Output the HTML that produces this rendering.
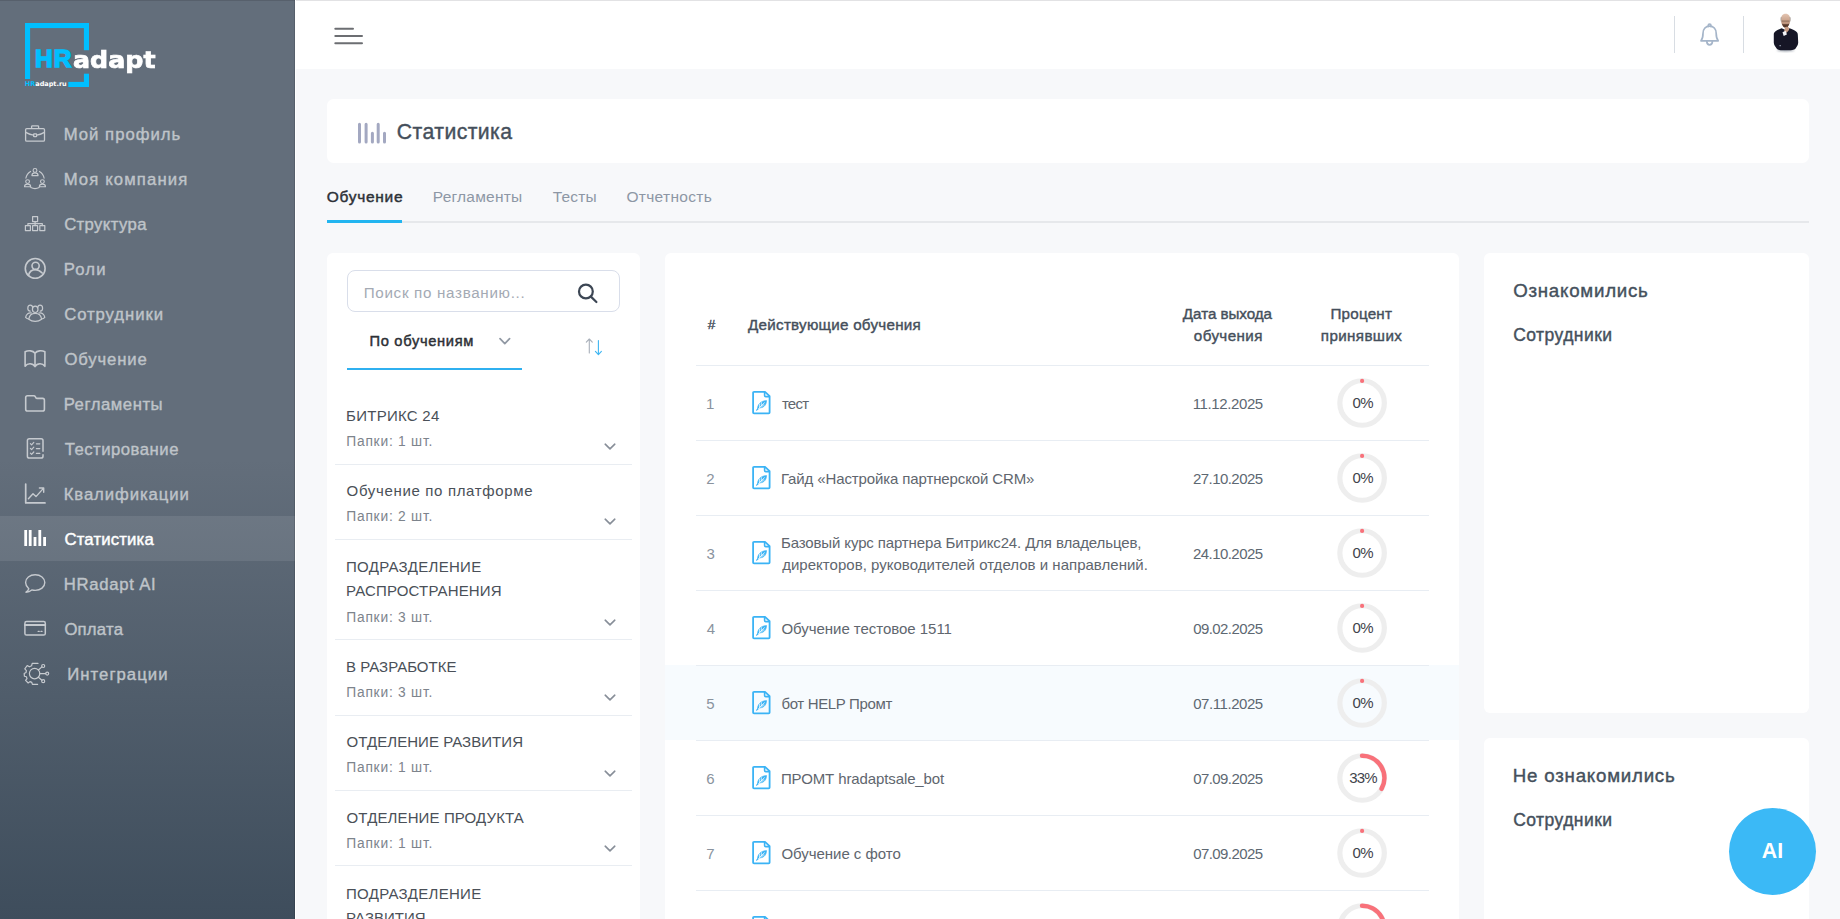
<!DOCTYPE html>
<html lang="ru">
<head>
<meta charset="utf-8">
<title>Статистика</title>
<style>
*{box-sizing:border-box;margin:0;padding:0}
html,body{width:1840px;height:919px;overflow:hidden;background:#f7f8fa;font-family:"Liberation Sans",sans-serif;color:#444b55}
.abs{position:absolute}
#sidebar{position:absolute;left:0;top:0;width:295px;height:919px;background:linear-gradient(to bottom,#636e7b 0%,#636e7b 50%,#3e4d5c 100%)}
#topbar{position:absolute;left:296px;top:0;width:1544px;height:69px;background:#fff;border-top:1px solid #e2e2e4}
.lg{font-weight:bold;white-space:nowrap;transform-origin:0 0}
.card{position:absolute;background:#fff;border-radius:6px}
.rowline{left:696px;width:733px;height:1px;background:#e8edf3}
.li-sep{left:335px;width:297px;height:1px;background:#e9edf2}
</style>
</head>
<body>
<div id="sidebar">
  <div class="abs" style="left:0;top:516px;width:295px;height:45px;background:rgba(255,255,255,.09)"></div>
<svg class="abs" style="left:0;top:0" width="295" height="919" viewBox="0 0 295 919" fill="none" stroke="#c6cacf" stroke-width="1.3" stroke-linecap="round" stroke-linejoin="round">
<!-- logo -->
<g stroke="none" fill="#00bfff">
<rect x="25" y="23" width="64" height="5.1"/>
<rect x="25" y="23" width="5.1" height="56"/>
<rect x="83.9" y="23" width="5.1" height="27.2"/>
<rect x="83.9" y="73.7" width="5.1" height="13.3"/>
<rect x="68.3" y="81.9" width="20.7" height="5.1"/>
</g>
<!-- 1 briefcase -->
<g>
<rect x="25.6" y="128.6" width="18.9" height="12.6" rx="1.2"/>
<path d="M31.6 128.4V126.6Q31.6 125.8 32.4 125.8H37.8Q38.6 125.8 38.6 126.6V128.4"/>
<path d="M25.8 132.4C29 134.2 32 135 33.6 135.2M36.6 135.2C38.2 135 41.2 134.2 44.4 132.4"/>
<rect x="33.6" y="133.8" width="3" height="2.8" rx=".6"/>
</g>
<!-- 2 company -->
<g stroke-width="1.1">
<circle cx="35" cy="170.4" r="1.9"/><path d="M31.9 175.6Q31.9 172.9 35 172.9Q38.1 172.9 38.1 175.6Z"/>
<circle cx="27.6" cy="181.6" r="1.9"/><path d="M24.5 186.8Q24.5 184.1 27.6 184.1Q30.7 184.1 30.7 186.8Z"/>
<circle cx="42.4" cy="181.6" r="1.9"/><path d="M39.3 186.8Q39.3 184.1 42.4 184.1Q45.5 184.1 45.5 186.8Z"/>
<path d="M25.9 178.2A9.4 9.4 0 0 1 30.6 171.4M39.4 171.4A9.4 9.4 0 0 1 44.1 178.2M30.8 187.6A9.4 9.4 0 0 0 39.2 187.6"/>
</g>
<!-- 3 structure -->
<g stroke-width="1.2">
<rect x="32.6" y="216.6" width="5" height="5"/>
<rect x="25.4" y="225.6" width="5" height="5"/>
<rect x="32.6" y="225.6" width="5" height="5"/>
<rect x="39.8" y="225.6" width="5" height="5"/>
<path d="M35.1 221.6V225.6M27.9 225.6V223.6H42.3V225.6"/>
</g>
<!-- 4 roles -->
<g stroke-width="1.6">
<circle cx="35.2" cy="268.4" r="9.9"/>
<circle cx="35.6" cy="265.8" r="3.6"/>
<path d="M28.4 275.4C29.4 271.6 32 269.6 35.6 269.6C37.4 269.6 39.4 270.4 42.2 273"/>
</g>
<!-- 5 employees -->
<g stroke-width="1.2">
<ellipse cx="35.2" cy="309.3" rx="2.8" ry="3.2"/>
<path d="M28.8 319.2C29.4 315 31.8 313.4 35.2 313.4C38.6 313.4 41 315 41.6 319.2C38 322 32.4 322 28.8 319.2Z"/>
<path d="M32.6 307.4C32.4 305.8 31.4 305.2 30.4 305.2C29 305.2 27.8 306.4 27.8 308.2C27.8 309.8 28.8 311 30.2 311.2M37.8 307.4C38 305.8 39 305.2 40 305.2C41.4 305.2 42.6 306.4 42.6 308.2C42.6 309.8 41.6 311 40.2 311.2"/>
<path d="M31.6 313C28.6 312.4 26.2 314 25.6 317.4C26.6 318.4 27.6 318.8 28.8 319M38.8 313C41.8 312.4 44.2 314 44.8 317.4C43.8 318.4 42.8 318.8 41.6 319"/>
</g>
<!-- 6 book -->
<g stroke-width="1.6">
<path d="M35 353.200C33 350.600 28.500 350.100 25.100 351.800V366.300C27.600 362.800 32.600 362.800 35 366.600C37.400 362.800 42.400 362.800 44.900 366.300V351.800C41.500 350.100 37 350.600 35 353.200V366.200"/>
</g>
<!-- 7 folder -->
<g stroke-width="1.6">
<path d="M25.700 397.600Q25.700 395.800 27.500 395.800H33.800Q34.800 395.800 35.300 396.700L35.800 397.600Q36.200 398.400 37.200 398.400H42.600Q44.400 398.400 44.400 400.200V409.200Q44.400 411 42.600 411H27.500Q25.700 411 25.700 409.200Z"/>
</g>
<!-- 8 testing -->
<g stroke-width="1.5">
<path d="M43 451.200V440.600Q43 438.700 41.100 438.700H29.300Q27.400 438.700 27.400 440.600V456.200Q27.400 458.100 29.300 458.100H41.100Q43 458.100 43 456.200V454.800"/>
<path d="M30.400 443.600L31.600 444.800L33.800 442.400M30.400 448.400L31.600 449.600L33.800 447.200M30.400 453.200L31.600 454.400L33.800 452M36.400 443.800H39.800M36.400 448.600H39.800M36.400 453.400H39.800" stroke-width="1.2"/>
</g>
<!-- 9 qualifications -->
<g stroke-width="1.7">
<path d="M25.700 484V502.900H45"/>
<path d="M28.400 498.800L33 493.800L36 496.600L43.400 488.400M39.400 488H43.700V492.300" stroke-width="1.4"/>
</g>
<!-- 10 stats -->
<g stroke="#ffffff" stroke-width="2.8" stroke-linecap="butt">
<path d="M25.700 530V546.100M30.200 530V546.100M35 537V546.100M39.800 530V546.100M44.600 537V546.100"/>
</g>
<!-- 11 chat -->
<g stroke-width="1.4">
<path d="M26 592.200C27.400 591.400 28.400 590.200 28.800 588.800C26.800 587 25.600 584.800 25.600 582.600C25.600 578.200 29.800 574.800 35.200 574.800C40.600 574.800 44.800 578.200 44.800 582.600C44.800 587 40.600 590.400 35.200 590.400C34 590.400 32.800 590.200 31.800 589.900C30.200 591.400 28.200 592.200 26 592.200Z"/>
</g>
<!-- 12 payment -->
<g stroke-width="1.5">
<rect x="24.900" y="621.600" width="20.400" height="13.500" rx="1.600"/>
<path d="M25 625H45.200" stroke-width="2"/>
<path d="M38.200 631.400H39.200M41 631.400H42" stroke-width="1.3"/>
</g>
<!-- 13 integrations -->
<g stroke-width="1.2">
<circle cx="34.600" cy="673.600" r="5.200"/>
<path d="M38 663.400H32.200L31.600 665.800L29.400 666.800L27.200 665.500L24.800 668.800L26.400 670.600L26 672.600L24.200 673.600L24.400 676.200L26.400 676.800L27 678.600L25.600 680.400L28.200 683L30 681.600L31.800 682.400L32.400 684.400H37.600"/>
<circle cx="43.200" cy="666" r="1.500"/><circle cx="47.200" cy="673.600" r="1.500"/><circle cx="43.200" cy="681.200" r="1.500"/>
<path d="M38.400 670L41.900 666.900M39.800 673.600H45.700M38.400 677.200L41.900 680.300"/>
</g>
</svg>
<div class="abs lg" style="left:35px;top:41.2px;font-size:24.4px;line-height:36px;color:#00bfff;font-family:'Liberation Sans',sans-serif;transform:scaleX(1.0);-webkit-text-stroke:1.5px #00bfff;letter-spacing:1.2px">HR</div>
<div class="abs lg" style="left:73.4px;top:42px;font-size:22.6px;line-height:36px;color:#fff;font-family:'DejaVu Sans',sans-serif;transform:scaleX(1.12);-webkit-text-stroke:.7px #fff">adapt</div>
<div class="abs lg" style="left:24.8px;top:78.2px;font-size:6.5px;line-height:12px;color:#00bfff;font-family:'DejaVu Sans',sans-serif">HR<span style="color:#fff">adapt.ru</span></div>

<div class="abs" style="left:63.65px;top:125.11px;font-size:16.7px;line-height:20px;color:#bfc4c9;white-space:nowrap;-webkit-text-stroke:0.4px #bfc4c9;letter-spacing:1.025px">Мой профиль</div>
<div class="abs" style="left:63.65px;top:170.11px;font-size:16.7px;line-height:20px;color:#bfc4c9;white-space:nowrap;-webkit-text-stroke:0.4px #bfc4c9;letter-spacing:1.127px">Моя компания</div>
<div class="abs" style="left:64.15px;top:215.11px;font-size:16.7px;line-height:20px;color:#bfc4c9;white-space:nowrap;-webkit-text-stroke:0.4px #bfc4c9;letter-spacing:0.394px">Структура</div>
<div class="abs" style="left:63.65px;top:260.11px;font-size:16.7px;line-height:20px;color:#bfc4c9;white-space:nowrap;-webkit-text-stroke:0.4px #bfc4c9;letter-spacing:1.183px">Роли</div>
<div class="abs" style="left:64.15px;top:305.11px;font-size:16.7px;line-height:20px;color:#bfc4c9;white-space:nowrap;-webkit-text-stroke:0.4px #bfc4c9;letter-spacing:0.939px">Сотрудники</div>
<div class="abs" style="left:64.40px;top:350.11px;font-size:16.7px;line-height:20px;color:#bfc4c9;white-space:nowrap;-webkit-text-stroke:0.4px #bfc4c9;letter-spacing:0.864px">Обучение</div>
<div class="abs" style="left:63.65px;top:395.11px;font-size:16.7px;line-height:20px;color:#bfc4c9;white-space:nowrap;-webkit-text-stroke:0.4px #bfc4c9;letter-spacing:0.550px">Регламенты</div>
<div class="abs" style="left:64.65px;top:440.11px;font-size:16.7px;line-height:20px;color:#bfc4c9;white-space:nowrap;-webkit-text-stroke:0.4px #bfc4c9;letter-spacing:0.509px">Тестирование</div>
<div class="abs" style="left:63.65px;top:485.11px;font-size:16.7px;line-height:20px;color:#bfc4c9;white-space:nowrap;-webkit-text-stroke:0.4px #bfc4c9;letter-spacing:0.923px">Квалификации</div>
<div class="abs" style="left:64.40px;top:530.11px;font-size:16.7px;line-height:20px;color:#ffffff;white-space:nowrap;-webkit-text-stroke:0.45px #ffffff;letter-spacing:0.189px">Статистика</div>
<div class="abs" style="left:63.65px;top:575.11px;font-size:16.7px;line-height:20px;color:#bfc4c9;white-space:nowrap;-webkit-text-stroke:0.4px #bfc4c9;letter-spacing:0.750px">HRadapt AI</div>
<div class="abs" style="left:64.40px;top:620.11px;font-size:16.7px;line-height:20px;color:#bfc4c9;white-space:nowrap;-webkit-text-stroke:0.4px #bfc4c9;letter-spacing:0.230px">Оплата</div>
<div class="abs" style="left:67.25px;top:665.11px;font-size:16.7px;line-height:20px;color:#bfc4c9;white-space:nowrap;-webkit-text-stroke:0.4px #bfc4c9;letter-spacing:1.050px">Интеграции</div>
</div>
<div id="topbar"></div>
<div class="abs" style="left:295px;top:0;width:1px;height:919px;background:#fff"></div>
<div class="abs" style="left:0;top:0;width:295px;height:1px;background:rgba(0,0,0,.12)"></div>
<div class="abs" style="left:294px;top:0;width:1px;height:919px;background:rgba(0,0,0,.13)"></div>
<svg class="abs" style="left:295px;top:0" width="1545" height="69" viewBox="295 0 1545 69" fill="none" stroke-linecap="round" stroke-linejoin="round">
<path d="M335.300 28.700H353M335.300 36H362M335.300 43.200H362" stroke="#6c6e72" stroke-width="2"/>
<path d="M1674.500 16V53M1743.500 16V53" stroke="#d8dde3" stroke-width="1" stroke-linecap="butt"/>
<g stroke="#a5b5c9" stroke-width="1.700">
<path d="M1701 40.800H1718.200C1716.600 39 1716.200 37 1716.200 33.600C1716.200 29 1713.400 26.200 1709.600 26.200C1705.800 26.200 1703 29 1703 33.600C1703 37 1702.600 39 1701 40.800Z"/>
<path d="M1708.300 26.400V25.300A1.300 1.300 0 0 1 1710.900 25.300V26.400"/>
<path d="M1706.800 41.200C1706.800 43.400 1708 44.800 1709.600 44.800C1711.200 44.800 1712.400 43.400 1712.400 41.200"/>
</g>
<!-- avatar -->
<defs>
<linearGradient id="hd" x1="0" y1="0" x2="0" y2="1"><stop offset="0" stop-color="#e3c5b2"/><stop offset=".55" stop-color="#c9a088"/><stop offset="1" stop-color="#a57f69"/></linearGradient>
<filter id="bl" x="-20%" y="-20%" width="140%" height="140%"><feGaussianBlur stdDeviation=".45"/></filter>
<filter id="bl2" x="-20%" y="-20%" width="140%" height="160%"><feGaussianBlur stdDeviation=".9"/></filter>
</defs>
<g stroke="none" filter="url(#bl)">
<ellipse cx="1785.600" cy="50.200" rx="8.600" ry="1.300" fill="#9aa0aa" filter="url(#bl2)"/>
<path d="M1781 20.500C1780.600 16 1782.600 13.700 1785.600 13.700C1788.600 13.700 1790.600 16 1790.200 20.500C1790 24 1788.200 27.400 1785.600 27.400C1783 27.400 1781.200 24 1781 20.500Z" fill="url(#hd)"/>
<path d="M1781.100 17.500C1780.800 18.600 1780.800 20 1781.200 21.200M1790.100 17.500C1790.400 18.600 1790.400 20 1790 21.200" stroke="#a9a39d" stroke-width=".9" fill="none"/>
<path d="M1782.200 21.100H1789" stroke="#6f5646" stroke-width=".7" fill="none"/>
<path d="M1782 23.400C1782.600 26.200 1784 27.600 1785.600 27.600C1787.200 27.600 1788.600 26.200 1789.200 23.400C1787.800 24.600 1783.400 24.600 1782 23.400Z" fill="#55392a"/>
<path d="M1773.800 34.500C1773.800 31.800 1776 30.600 1781.600 28.200L1785.600 30L1789.600 28.200C1795.200 30.600 1797.800 31.800 1797.800 34.500L1798.200 42.600C1798.200 45.400 1796.800 46.800 1795.600 48.400C1794.400 50 1791 50.200 1785.600 50.200C1780.200 50.200 1777.600 50 1776.600 48.400C1775.400 46.600 1773.800 45.400 1773.800 42.600Z" fill="#131728"/>
<path d="M1784 31.500L1785 27.800C1785.400 26.600 1787.600 26.200 1788.600 27.200C1789.400 28 1789.400 29.600 1788.600 30.400L1786.600 32.800Z" fill="#c79c84"/>
<path d="M1782.500 32.200L1785.700 30.800L1786.900 34.600L1783.700 36Z" fill="#f3f3f6"/>
<rect x="1779.400" y="45.200" width="1.600" height="1" fill="#9aa0b0"/>
</g>
</svg>

<div class="card" id="titlecard" style="left:327px;top:99px;width:1482px;height:64px;border-radius:6.5px">
  <svg class="abs" style="left:30px;top:22px" width="30" height="24" viewBox="0 0 30 24" fill="none" stroke="#a3a8c1" stroke-width="3" stroke-linecap="round"><path d="M2.5 3.3V21M9.1 3.3V21M15.4 12.3V21M21.2 3.3V21M27.5 12.3V21"/></svg>
</div>
<div class="abs" style="left:327px;top:221px;width:1482px;height:2px;background:#e6e8eb"></div>
<div class="abs" style="left:327px;top:220px;width:75px;height:3px;background:#22b5f0"></div>

<div class="card" id="left" style="left:327px;top:253px;width:313px;height:700px"></div>
<div class="card" id="mid" style="left:665px;top:253px;width:794px;height:700px"></div>
<div class="card" id="r1" style="left:1484px;top:253px;width:325px;height:460px"></div>
<div class="card" id="r2" style="left:1484px;top:738px;width:325px;height:300px"></div>

<!-- left panel -->
<div class="abs" style="left:347px;top:270px;width:273px;height:42px;border:1px solid #d9deea;border-radius:8px;background:#fff"></div>
<svg class="abs" style="left:574px;top:280px" width="28" height="26" viewBox="0 0 28 26" fill="none" stroke="#3c4654" stroke-width="2.2" stroke-linecap="round"><circle cx="11.9" cy="11.5" r="6.9"/><path d="M16.9 16.6L22.4 22"/></svg>
<svg class="abs" style="left:497px;top:335px" width="16" height="12" viewBox="0 0 16 12" fill="none" stroke="#9098a3" stroke-width="1.7" stroke-linecap="round" stroke-linejoin="round"><path d="M3 3.6L7.8 8.6L12.6 3.6"/></svg>
<div class="abs" style="left:347px;top:368px;width:175px;height:2px;background:#2fb0f0"></div>
<svg class="abs" style="left:582px;top:334px" width="24" height="24" viewBox="0 0 24 24" fill="none" stroke-width="1.1" stroke-linecap="round" stroke-linejoin="round"><path d="M7.3 19V5.2M4.3 8.2L7.3 5L10.3 8.2" stroke="#a9b0ba"/><path d="M16.4 6.5V20.5M13.4 17.4L16.4 20.7L19.4 17.4" stroke="#3fb6f2"/></svg>
<svg class="abs" style="left:602px;top:441.0px" width="16" height="12" viewBox="0 0 16 12" fill="none" stroke="#878e98" stroke-width="1.6" stroke-linecap="round" stroke-linejoin="round"><path d="M3.2 3.2L8 7.8L12.8 3.2"/></svg>
<div class="abs li-sep" style="top:464px"></div>
<svg class="abs" style="left:602px;top:516.4px" width="16" height="12" viewBox="0 0 16 12" fill="none" stroke="#878e98" stroke-width="1.6" stroke-linecap="round" stroke-linejoin="round"><path d="M3.2 3.2L8 7.8L12.8 3.2"/></svg>
<div class="abs li-sep" style="top:539px"></div>
<svg class="abs" style="left:602px;top:616.8px" width="16" height="12" viewBox="0 0 16 12" fill="none" stroke="#878e98" stroke-width="1.6" stroke-linecap="round" stroke-linejoin="round"><path d="M3.2 3.2L8 7.8L12.8 3.2"/></svg>
<div class="abs li-sep" style="top:639px"></div>
<svg class="abs" style="left:602px;top:692.2px" width="16" height="12" viewBox="0 0 16 12" fill="none" stroke="#878e98" stroke-width="1.6" stroke-linecap="round" stroke-linejoin="round"><path d="M3.2 3.2L8 7.8L12.8 3.2"/></svg>
<div class="abs li-sep" style="top:715px"></div>
<svg class="abs" style="left:602px;top:767.6px" width="16" height="12" viewBox="0 0 16 12" fill="none" stroke="#878e98" stroke-width="1.6" stroke-linecap="round" stroke-linejoin="round"><path d="M3.2 3.2L8 7.8L12.8 3.2"/></svg>
<div class="abs li-sep" style="top:790px"></div>
<svg class="abs" style="left:602px;top:843.0px" width="16" height="12" viewBox="0 0 16 12" fill="none" stroke="#878e98" stroke-width="1.6" stroke-linecap="round" stroke-linejoin="round"><path d="M3.2 3.2L8 7.8L12.8 3.2"/></svg>
<div class="abs li-sep" style="top:865px"></div>
<svg class="abs" style="left:602px;top:943.4px" width="16" height="12" viewBox="0 0 16 12" fill="none" stroke="#878e98" stroke-width="1.6" stroke-linecap="round" stroke-linejoin="round"><path d="M3.2 3.2L8 7.8L12.8 3.2"/></svg>
<div class="abs li-sep" style="top:966px"></div>
<!-- mid panel -->
<div class="abs rowline" style="top:365px"></div>
<div class="abs rowline" style="top:440px"></div>
<div class="abs rowline" style="top:515px"></div>
<div class="abs rowline" style="top:590px"></div>
<div class="abs" style="left:665px;top:665px;width:794px;height:75px;background:#f7fbfe"></div>
<div class="abs rowline" style="top:665px"></div>
<div class="abs rowline" style="top:740px"></div>
<div class="abs rowline" style="top:815px"></div>
<div class="abs rowline" style="top:890px"></div>
<svg class="abs" style="left:665px;top:254px" width="794" height="665" viewBox="665 254 794 665">
<g transform="translate(752.0,390.8)" fill="none" stroke="#3bb3f5" stroke-width="1.8" stroke-linejoin="round" stroke-linecap="round"><path d="M2 1 H13 L17.600 5.400 V21.600 Q17.600 22.500 16.700 22.500 H2 Q1.100 22.500 1.100 21.600 V1.900 Q1.100 1 2 1 Z"/><path d="M12.6 1.4 V4.6 Q12.6 5.8 13.8 5.8 H17.2" stroke-width="1.6"/><path d="M5.600 18.400 C5.200 13.600 8.800 10 14.600 9.800 C14.400 14.800 11.200 17.400 6.600 17.200 Z" fill="#3bb3f5" stroke-width="0.6"/><path d="M5.400 18.800 L12.400 12" stroke="#fff" stroke-width="0.8"/><path d="M7.600 16.300 L10.200 16 M9.300 14.600 L12 14.200 M7.400 15.800 L7.500 13.200 M9.200 14.200 L9.400 11.800" stroke="#fff" stroke-width="0.7"/><path d="M4.6 19.4 L6 18" stroke-width="1.2"/></g>

<circle cx="1362.1" cy="403.0" r="22.25" fill="none" stroke="#eeeeee" stroke-width="5.2"/><circle cx="1362.1" cy="380.9" r="2.1" fill="#f8717a"/>
<g transform="translate(752.0,465.8)" fill="none" stroke="#3bb3f5" stroke-width="1.8" stroke-linejoin="round" stroke-linecap="round"><path d="M2 1 H13 L17.600 5.400 V21.600 Q17.600 22.500 16.700 22.500 H2 Q1.100 22.500 1.100 21.600 V1.900 Q1.100 1 2 1 Z"/><path d="M12.6 1.4 V4.6 Q12.6 5.8 13.8 5.8 H17.2" stroke-width="1.6"/><path d="M5.600 18.400 C5.200 13.600 8.800 10 14.600 9.800 C14.400 14.800 11.200 17.400 6.600 17.200 Z" fill="#3bb3f5" stroke-width="0.6"/><path d="M5.400 18.800 L12.400 12" stroke="#fff" stroke-width="0.8"/><path d="M7.600 16.300 L10.200 16 M9.300 14.600 L12 14.200 M7.400 15.800 L7.500 13.200 M9.200 14.200 L9.400 11.800" stroke="#fff" stroke-width="0.7"/><path d="M4.6 19.4 L6 18" stroke-width="1.2"/></g>

<circle cx="1362.1" cy="478.0" r="22.25" fill="none" stroke="#eeeeee" stroke-width="5.2"/><circle cx="1362.1" cy="455.9" r="2.1" fill="#f8717a"/>
<g transform="translate(752.0,540.8)" fill="none" stroke="#3bb3f5" stroke-width="1.8" stroke-linejoin="round" stroke-linecap="round"><path d="M2 1 H13 L17.600 5.400 V21.600 Q17.600 22.500 16.700 22.500 H2 Q1.100 22.500 1.100 21.600 V1.900 Q1.100 1 2 1 Z"/><path d="M12.6 1.4 V4.6 Q12.6 5.8 13.8 5.8 H17.2" stroke-width="1.6"/><path d="M5.600 18.400 C5.200 13.600 8.800 10 14.600 9.800 C14.400 14.800 11.200 17.400 6.600 17.200 Z" fill="#3bb3f5" stroke-width="0.6"/><path d="M5.400 18.800 L12.400 12" stroke="#fff" stroke-width="0.8"/><path d="M7.600 16.300 L10.200 16 M9.300 14.600 L12 14.200 M7.400 15.800 L7.500 13.200 M9.200 14.200 L9.400 11.800" stroke="#fff" stroke-width="0.7"/><path d="M4.6 19.4 L6 18" stroke-width="1.2"/></g>

<circle cx="1362.1" cy="553.0" r="22.25" fill="none" stroke="#eeeeee" stroke-width="5.2"/><circle cx="1362.1" cy="530.9" r="2.1" fill="#f8717a"/>
<g transform="translate(752.0,615.8)" fill="none" stroke="#3bb3f5" stroke-width="1.8" stroke-linejoin="round" stroke-linecap="round"><path d="M2 1 H13 L17.600 5.400 V21.600 Q17.600 22.500 16.700 22.500 H2 Q1.100 22.500 1.100 21.600 V1.900 Q1.100 1 2 1 Z"/><path d="M12.6 1.4 V4.6 Q12.6 5.8 13.8 5.8 H17.2" stroke-width="1.6"/><path d="M5.600 18.400 C5.200 13.600 8.800 10 14.600 9.800 C14.400 14.800 11.200 17.400 6.600 17.200 Z" fill="#3bb3f5" stroke-width="0.6"/><path d="M5.400 18.800 L12.400 12" stroke="#fff" stroke-width="0.8"/><path d="M7.600 16.300 L10.200 16 M9.300 14.600 L12 14.200 M7.400 15.800 L7.500 13.200 M9.200 14.200 L9.400 11.800" stroke="#fff" stroke-width="0.7"/><path d="M4.6 19.4 L6 18" stroke-width="1.2"/></g>

<circle cx="1362.1" cy="628.0" r="22.25" fill="none" stroke="#eeeeee" stroke-width="5.2"/><circle cx="1362.1" cy="605.9" r="2.1" fill="#f8717a"/>
<g transform="translate(752.0,690.8)" fill="none" stroke="#3bb3f5" stroke-width="1.8" stroke-linejoin="round" stroke-linecap="round"><path d="M2 1 H13 L17.600 5.400 V21.600 Q17.600 22.500 16.700 22.500 H2 Q1.100 22.500 1.100 21.600 V1.900 Q1.100 1 2 1 Z"/><path d="M12.6 1.4 V4.6 Q12.6 5.8 13.8 5.8 H17.2" stroke-width="1.6"/><path d="M5.600 18.400 C5.200 13.600 8.800 10 14.600 9.800 C14.400 14.800 11.200 17.400 6.600 17.200 Z" fill="#3bb3f5" stroke-width="0.6"/><path d="M5.400 18.800 L12.400 12" stroke="#fff" stroke-width="0.8"/><path d="M7.600 16.300 L10.200 16 M9.300 14.600 L12 14.200 M7.400 15.800 L7.500 13.200 M9.200 14.200 L9.400 11.800" stroke="#fff" stroke-width="0.7"/><path d="M4.6 19.4 L6 18" stroke-width="1.2"/></g>

<circle cx="1362.1" cy="703.0" r="22.25" fill="none" stroke="#eeeeee" stroke-width="5.2"/><circle cx="1362.1" cy="680.9" r="2.1" fill="#f8717a"/>
<g transform="translate(752.0,765.8)" fill="none" stroke="#3bb3f5" stroke-width="1.8" stroke-linejoin="round" stroke-linecap="round"><path d="M2 1 H13 L17.600 5.400 V21.600 Q17.600 22.500 16.700 22.500 H2 Q1.100 22.500 1.100 21.600 V1.900 Q1.100 1 2 1 Z"/><path d="M12.6 1.4 V4.6 Q12.6 5.8 13.8 5.8 H17.2" stroke-width="1.6"/><path d="M5.600 18.400 C5.200 13.600 8.800 10 14.600 9.800 C14.400 14.800 11.200 17.400 6.600 17.200 Z" fill="#3bb3f5" stroke-width="0.6"/><path d="M5.400 18.800 L12.400 12" stroke="#fff" stroke-width="0.8"/><path d="M7.600 16.300 L10.200 16 M9.300 14.600 L12 14.200 M7.400 15.800 L7.500 13.200 M9.200 14.200 L9.400 11.800" stroke="#fff" stroke-width="0.7"/><path d="M4.6 19.4 L6 18" stroke-width="1.2"/></g>

<circle cx="1362.1" cy="778.0" r="22.25" fill="none" stroke="#eeeeee" stroke-width="5.2"/><path d="M1362.1 755.75 A22.25 22.25 0 0 1 1381.60 788.72" fill="none" stroke="#f8717a" stroke-width="4.6" stroke-linecap="round"/>
<g transform="translate(752.0,840.8)" fill="none" stroke="#3bb3f5" stroke-width="1.8" stroke-linejoin="round" stroke-linecap="round"><path d="M2 1 H13 L17.600 5.400 V21.600 Q17.600 22.500 16.700 22.500 H2 Q1.100 22.500 1.100 21.600 V1.900 Q1.100 1 2 1 Z"/><path d="M12.6 1.4 V4.6 Q12.6 5.8 13.8 5.8 H17.2" stroke-width="1.6"/><path d="M5.600 18.400 C5.200 13.600 8.800 10 14.600 9.800 C14.400 14.800 11.200 17.400 6.600 17.200 Z" fill="#3bb3f5" stroke-width="0.6"/><path d="M5.400 18.800 L12.400 12" stroke="#fff" stroke-width="0.8"/><path d="M7.600 16.300 L10.200 16 M9.300 14.600 L12 14.200 M7.400 15.800 L7.500 13.200 M9.200 14.200 L9.400 11.800" stroke="#fff" stroke-width="0.7"/><path d="M4.6 19.4 L6 18" stroke-width="1.2"/></g>

<circle cx="1362.1" cy="853.0" r="22.25" fill="none" stroke="#eeeeee" stroke-width="5.2"/><circle cx="1362.1" cy="830.9" r="2.1" fill="#f8717a"/>
<g transform="translate(752.0,915.8)" fill="none" stroke="#3bb3f5" stroke-width="1.8" stroke-linejoin="round" stroke-linecap="round"><path d="M2 1 H13 L17.600 5.400 V21.600 Q17.600 22.500 16.700 22.500 H2 Q1.100 22.500 1.100 21.600 V1.900 Q1.100 1 2 1 Z"/><path d="M12.6 1.4 V4.6 Q12.6 5.8 13.8 5.8 H17.2" stroke-width="1.6"/><path d="M5.600 18.400 C5.200 13.600 8.800 10 14.600 9.800 C14.400 14.800 11.200 17.400 6.600 17.200 Z" fill="#3bb3f5" stroke-width="0.6"/><path d="M5.400 18.800 L12.400 12" stroke="#fff" stroke-width="0.8"/><path d="M7.600 16.300 L10.200 16 M9.300 14.600 L12 14.200 M7.400 15.800 L7.500 13.200 M9.200 14.200 L9.400 11.800" stroke="#fff" stroke-width="0.7"/><path d="M4.6 19.4 L6 18" stroke-width="1.2"/></g>

<circle cx="1362.1" cy="928.0" r="22.25" fill="none" stroke="#eeeeee" stroke-width="5.2"/><path d="M1362.1 905.75 A22.25 22.25 0 0 1 1381.60 938.72" fill="none" stroke="#f8717a" stroke-width="4.6" stroke-linecap="round"/>
</svg>
<div class="abs" style="left:396.85px;top:122.35px;font-size:21.2px;line-height:20px;color:#454f5b;white-space:nowrap;-webkit-text-stroke:0.4px #454f5b;letter-spacing:0.439px">Статистика</div>
<div class="abs" style="left:326.70px;top:187.43px;font-size:15.5px;line-height:20px;color:#2e3238;white-space:nowrap;-webkit-text-stroke:0.45px #2e3238;letter-spacing:0.714px">Обучение</div>
<div class="abs" style="left:432.85px;top:187.43px;font-size:15.5px;line-height:20px;color:#8d97a5;white-space:nowrap;letter-spacing:0.222px">Регламенты</div>
<div class="abs" style="left:552.75px;top:187.43px;font-size:15.5px;line-height:20px;color:#8d97a5;white-space:nowrap;letter-spacing:0.175px">Тесты</div>
<div class="abs" style="left:626.45px;top:187.43px;font-size:15.5px;line-height:20px;color:#8d97a5;white-space:nowrap;letter-spacing:0.317px">Отчетность</div>
<div class="abs" style="left:363.75px;top:282.53px;font-size:15.2px;line-height:20px;color:#a4aab4;white-space:nowrap;letter-spacing:0.674px">Поиск по названию...</div>
<div class="abs" style="left:369.60px;top:330.61px;font-size:14.7px;line-height:20px;color:#2d3036;white-space:nowrap;-webkit-text-stroke:0.45px #2d3036;letter-spacing:0.650px">По обучениям</div>
<div class="abs" style="left:346.05px;top:405.60px;font-size:15px;line-height:20px;color:#4a5058;white-space:nowrap;letter-spacing:0.272px">БИТРИКС 24</div>
<div class="abs" style="left:346.30px;top:431.72px;font-size:13.8px;line-height:20px;color:#7d848c;white-space:nowrap;letter-spacing:0.755px">Папки: 1 шт.</div>
<div class="abs" style="left:346.55px;top:481.00px;font-size:15px;line-height:20px;color:#4a5058;white-space:nowrap;letter-spacing:0.665px">Обучение по платформе</div>
<div class="abs" style="left:346.30px;top:507.12px;font-size:13.8px;line-height:20px;color:#7d848c;white-space:nowrap;letter-spacing:0.755px">Папки: 2 шт.</div>
<div class="abs" style="left:346.05px;top:557.40px;font-size:15px;line-height:20px;color:#4a5058;white-space:nowrap;letter-spacing:0.275px">ПОДРАЗДЕЛЕНИЕ</div>
<div class="abs" style="left:346.05px;top:581.40px;font-size:15px;line-height:20px;color:#4a5058;white-space:nowrap;letter-spacing:0.150px">РАСПРОСТРАНЕНИЯ</div>
<div class="abs" style="left:346.30px;top:607.52px;font-size:13.8px;line-height:20px;color:#7d848c;white-space:nowrap;letter-spacing:0.755px">Папки: 3 шт.</div>
<div class="abs" style="left:346.05px;top:656.80px;font-size:15px;line-height:20px;color:#4a5058;white-space:nowrap;letter-spacing:0.009px">В РАЗРАБОТКЕ</div>
<div class="abs" style="left:346.30px;top:682.92px;font-size:13.8px;line-height:20px;color:#7d848c;white-space:nowrap;letter-spacing:0.755px">Папки: 3 шт.</div>
<div class="abs" style="left:346.55px;top:732.20px;font-size:15px;line-height:20px;color:#4a5058;white-space:nowrap;letter-spacing:0.050px">ОТДЕЛЕНИЕ РАЗВИТИЯ</div>
<div class="abs" style="left:346.30px;top:758.32px;font-size:13.8px;line-height:20px;color:#7d848c;white-space:nowrap;letter-spacing:0.755px">Папки: 1 шт.</div>
<div class="abs" style="left:346.55px;top:807.60px;font-size:15px;line-height:20px;color:#4a5058;white-space:nowrap;letter-spacing:0.124px">ОТДЕЛЕНИЕ ПРОДУКТА</div>
<div class="abs" style="left:346.30px;top:833.72px;font-size:13.8px;line-height:20px;color:#7d848c;white-space:nowrap;letter-spacing:0.755px">Папки: 1 шт.</div>
<div class="abs" style="left:346.05px;top:884.00px;font-size:15px;line-height:20px;color:#4a5058;white-space:nowrap;letter-spacing:0.275px">ПОДРАЗДЕЛЕНИЕ</div>
<div class="abs" style="left:346.05px;top:908.00px;font-size:15px;line-height:20px;color:#4a5058;white-space:nowrap">РАЗВИТИЯ</div>
<div class="abs" style="left:346.30px;top:934.12px;font-size:13.8px;line-height:20px;color:#7d848c;white-space:nowrap;letter-spacing:0.755px">Папки: 2 шт.</div>
<div class="abs" style="left:707.65px;top:314.92px;font-size:13.5px;line-height:20px;color:#454f5b;white-space:nowrap;-webkit-text-stroke:0.4px #454f5b">#</div>
<div class="abs" style="left:748.10px;top:314.83px;font-size:15.2px;line-height:20px;color:#454f5b;white-space:nowrap;-webkit-text-stroke:0.4px #454f5b;letter-spacing:0.245px">Действующие обучения</div>
<div class="abs" style="left:1182.85px;top:304.13px;font-size:15.2px;line-height:20px;color:#454f5b;white-space:nowrap;-webkit-text-stroke:0.4px #454f5b;letter-spacing:-0.050px">Дата выхода</div>
<div class="abs" style="left:1193.80px;top:325.63px;font-size:15.2px;line-height:20px;color:#454f5b;white-space:nowrap;-webkit-text-stroke:0.4px #454f5b;letter-spacing:0.386px">обучения</div>
<div class="abs" style="left:1330.40px;top:304.13px;font-size:15.2px;line-height:20px;color:#454f5b;white-space:nowrap;-webkit-text-stroke:0.4px #454f5b;letter-spacing:0.233px">Процент</div>
<div class="abs" style="left:1320.85px;top:325.63px;font-size:15.2px;line-height:20px;color:#454f5b;white-space:nowrap;-webkit-text-stroke:0.4px #454f5b;letter-spacing:0.363px">принявших</div>
<div class="abs" style="left:706.00px;top:393.60px;font-size:15px;line-height:20px;color:#8a939e;white-space:nowrap">1</div>
<div class="abs" style="left:781.95px;top:393.70px;font-size:15px;line-height:20px;color:#60666e;white-space:nowrap;letter-spacing:-0.767px">тест</div>
<div class="abs" style="left:1192.70px;top:393.50px;font-size:15px;line-height:20px;color:#5d6872;white-space:nowrap;letter-spacing:-0.383px">11.12.2025</div>
<div class="abs" style="left:1352.55px;top:392.70px;font-size:15px;line-height:20px;color:#3f444c;white-space:nowrap;letter-spacing:-0.650px">0%</div>
<div class="abs" style="left:706.25px;top:468.60px;font-size:15px;line-height:20px;color:#8a939e;white-space:nowrap">2</div>
<div class="abs" style="left:780.95px;top:468.70px;font-size:15px;line-height:20px;color:#60666e;white-space:nowrap;letter-spacing:-0.119px">Гайд «Настройка партнерской CRM»</div>
<div class="abs" style="left:1192.95px;top:468.50px;font-size:15px;line-height:20px;color:#5d6872;white-space:nowrap;letter-spacing:-0.550px">27.10.2025</div>
<div class="abs" style="left:1352.55px;top:467.70px;font-size:15px;line-height:20px;color:#3f444c;white-space:nowrap;letter-spacing:-0.650px">0%</div>
<div class="abs" style="left:706.50px;top:543.60px;font-size:15px;line-height:20px;color:#8a939e;white-space:nowrap">3</div>
<div class="abs" style="left:780.95px;top:532.70px;font-size:15px;line-height:20px;color:#60666e;white-space:nowrap;letter-spacing:-0.124px">Базовый курс партнера Битрикс24. Для владельцев,</div>
<div class="abs" style="left:782.20px;top:554.70px;font-size:15px;line-height:20px;color:#60666e;white-space:nowrap;letter-spacing:0.021px">директоров, руководителей отделов и направлений.</div>
<div class="abs" style="left:1192.95px;top:543.50px;font-size:15px;line-height:20px;color:#5d6872;white-space:nowrap;letter-spacing:-0.550px">24.10.2025</div>
<div class="abs" style="left:1352.55px;top:542.70px;font-size:15px;line-height:20px;color:#3f444c;white-space:nowrap;letter-spacing:-0.650px">0%</div>
<div class="abs" style="left:706.75px;top:618.60px;font-size:15px;line-height:20px;color:#8a939e;white-space:nowrap">4</div>
<div class="abs" style="left:781.45px;top:618.70px;font-size:15px;line-height:20px;color:#60666e;white-space:nowrap;letter-spacing:-0.036px">Обучение тестовое 1511</div>
<div class="abs" style="left:1193.20px;top:618.50px;font-size:15px;line-height:20px;color:#5d6872;white-space:nowrap;letter-spacing:-0.578px">09.02.2025</div>
<div class="abs" style="left:1352.55px;top:617.70px;font-size:15px;line-height:20px;color:#3f444c;white-space:nowrap;letter-spacing:-0.650px">0%</div>
<div class="abs" style="left:706.25px;top:693.60px;font-size:15px;line-height:20px;color:#8a939e;white-space:nowrap">5</div>
<div class="abs" style="left:781.45px;top:693.70px;font-size:15px;line-height:20px;color:#60666e;white-space:nowrap;letter-spacing:-0.346px">бот HELP Промт</div>
<div class="abs" style="left:1193.20px;top:693.50px;font-size:15px;line-height:20px;color:#5d6872;white-space:nowrap;letter-spacing:-0.439px">07.11.2025</div>
<div class="abs" style="left:1352.55px;top:692.70px;font-size:15px;line-height:20px;color:#3f444c;white-space:nowrap;letter-spacing:-0.650px">0%</div>
<div class="abs" style="left:706.25px;top:768.60px;font-size:15px;line-height:20px;color:#8a939e;white-space:nowrap">6</div>
<div class="abs" style="left:780.95px;top:768.70px;font-size:15px;line-height:20px;color:#60666e;white-space:nowrap;letter-spacing:-0.113px">ПРОМТ hradaptsale_bot</div>
<div class="abs" style="left:1193.20px;top:768.50px;font-size:15px;line-height:20px;color:#5d6872;white-space:nowrap;letter-spacing:-0.578px">07.09.2025</div>
<div class="abs" style="left:1349.25px;top:767.70px;font-size:15px;line-height:20px;color:#3f444c;white-space:nowrap;letter-spacing:-0.850px">33%</div>
<div class="abs" style="left:706.25px;top:843.60px;font-size:15px;line-height:20px;color:#8a939e;white-space:nowrap">7</div>
<div class="abs" style="left:781.45px;top:843.70px;font-size:15px;line-height:20px;color:#60666e;white-space:nowrap;letter-spacing:-0.036px">Обучение с фото</div>
<div class="abs" style="left:1193.20px;top:843.50px;font-size:15px;line-height:20px;color:#5d6872;white-space:nowrap;letter-spacing:-0.578px">07.09.2025</div>
<div class="abs" style="left:1352.55px;top:842.70px;font-size:15px;line-height:20px;color:#3f444c;white-space:nowrap;letter-spacing:-0.650px">0%</div>
<div class="abs" style="left:706.25px;top:918.60px;font-size:15px;line-height:20px;color:#8a939e;white-space:nowrap">8</div>
<div class="abs" style="left:781.45px;top:918.70px;font-size:15px;line-height:20px;color:#60666e;white-space:nowrap">Обучение</div>
<div class="abs" style="left:1193.20px;top:918.50px;font-size:15px;line-height:20px;color:#5d6872;white-space:nowrap;letter-spacing:-0.578px">01.09.2025</div>
<div class="abs" style="left:1349.25px;top:917.70px;font-size:15px;line-height:20px;color:#3f444c;white-space:nowrap;letter-spacing:-0.850px">33%</div>
<div class="abs" style="left:1513.15px;top:281.22px;font-size:18.7px;line-height:20px;color:#45505c;white-space:nowrap;-webkit-text-stroke:0.4px #45505c;letter-spacing:0.764px">Ознакомились</div>
<div class="abs" style="left:1513.15px;top:324.64px;font-size:17.5px;line-height:20px;color:#45505c;white-space:nowrap;-webkit-text-stroke:0.4px #45505c;letter-spacing:0.467px">Сотрудники</div>
<div class="abs" style="left:1512.85px;top:766.22px;font-size:18.7px;line-height:20px;color:#45505c;white-space:nowrap;-webkit-text-stroke:0.4px #45505c;letter-spacing:0.775px">Не ознакомились</div>
<div class="abs" style="left:1513.15px;top:809.74px;font-size:17.5px;line-height:20px;color:#45505c;white-space:nowrap;-webkit-text-stroke:0.4px #45505c;letter-spacing:0.467px">Сотрудники</div>
<div class="abs" style="left:1729px;top:808px;width:87px;height:87px;border-radius:50%;background:#3bb9f6;color:#fff;font-weight:bold;font-size:21.3px;line-height:87.6px;text-align:center">AI</div>
</body>
</html>
